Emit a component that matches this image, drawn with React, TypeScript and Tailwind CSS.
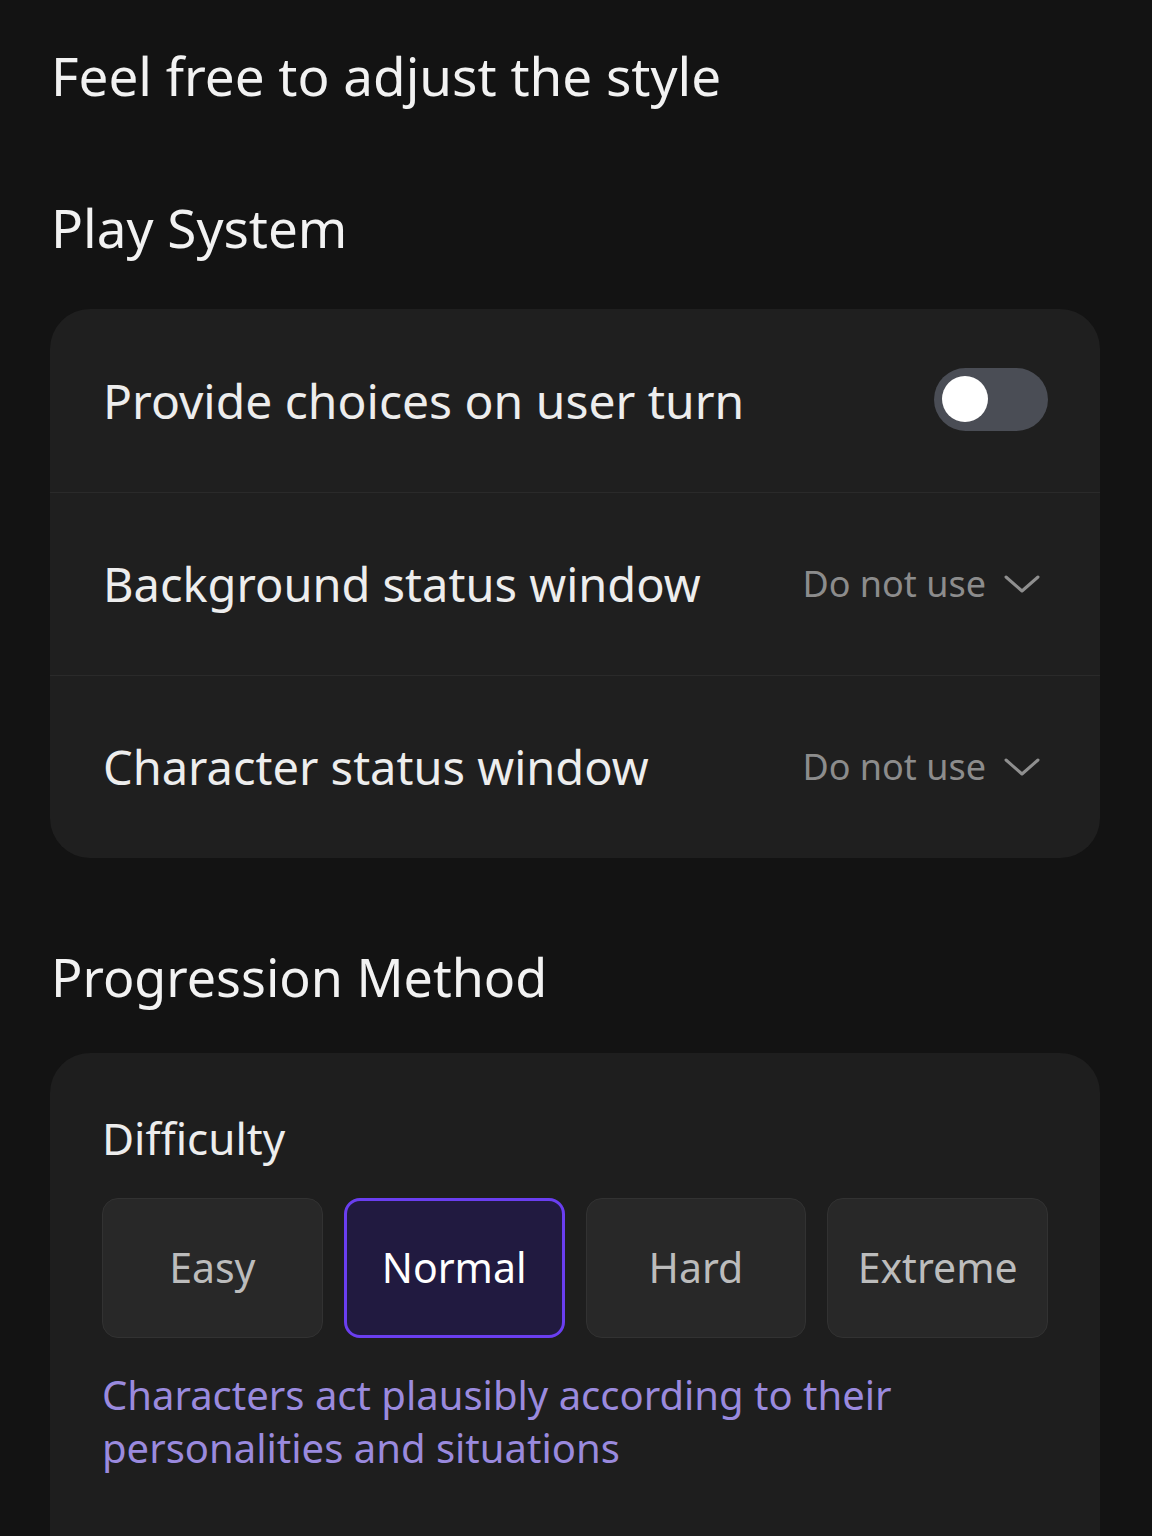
import React, { useState } from 'react'

type Level = 'Easy' | 'Normal' | 'Hard' | 'Extreme'

const levels: Level[] = ['Easy', 'Normal', 'Hard', 'Extreme']

const Chevron = () => (
  <svg width="36" height="20" viewBox="0 0 36 20" fill="none" className="shrink-0">
    <polyline points="2,3 18,17 34,3" stroke="#8f8f8f" strokeWidth="3" strokeLinecap="round" strokeLinejoin="round" />
  </svg>
)

const SelectRow = ({ label, value }: { label: string; value: string }) => (
  <div className="h-[183px] flex items-center justify-between pl-[53px] pr-[60px] border-t border-[#2a2a2a]">
    <span className="text-[47px] text-[#ededed]">{label}</span>
    <div className="flex items-center gap-[18px]">
      <span className="text-[36px] text-[#8c8c8c]">{value}</span>
      <Chevron />
    </div>
  </div>
)

export default function App() {
  const [choices, setChoices] = useState(false)
  const [level, setLevel] = useState<Level>('Normal')

  return (
    <div
      className="min-h-screen bg-[#131313] text-white px-[50px] pt-[44px] overflow-hidden"
      style={{ fontFamily: '"Noto Sans", "Open Sans", sans-serif', height: 1536 }}
    >
      <h1 className="text-[53px] leading-[64px] text-[#f2f2f2] pl-[1px]">Feel free to adjust the style</h1>

      {/* Play system */}
      <h2 className="mt-[88px] text-[53px] leading-[64px] text-[#f2f2f2] pl-[1px]">Play System</h2>
      <div className="mt-[49px] w-[1050px] rounded-[40px] bg-[#1f1f1f] overflow-hidden">
        <div className="h-[183px] flex items-center justify-between pl-[53px] pr-[52px]">
          <span className="text-[48px] text-[#ededed]">Provide choices on user turn</span>
          <button
            onClick={() => setChoices(!choices)}
            className={`w-[114px] h-[63px] -mt-[3px] rounded-full flex items-center px-[8px] ${
              choices ? 'bg-[#6d3ff0] justify-end' : 'bg-[#4a4d55] justify-start'
            }`}
          >
            <span className="w-[46px] h-[46px] rounded-full bg-white block" />
          </button>
        </div>
        <SelectRow label="Background status window" value="Do not use" />
        <SelectRow label="Character status window" value="Do not use" />
      </div>

      {/* Progression */}
      <h2 className="mt-[87px] text-[52px] leading-[64px] text-[#f2f2f2] pl-[1px]">Progression Method</h2>
      <div className="mt-[44px] w-[1050px] h-[600px] rounded-[40px] bg-[#1e1e1e] px-[52px] pt-[57px]">
        <div className="text-[44px] leading-[57px] text-[#ededed]">Difficulty</div>
        <div className="mt-[31px] grid grid-cols-4 gap-[21px]">
          {levels.map(l => (
            <button
              key={l}
              onClick={() => setLevel(l)}
              className={`h-[140px] rounded-[16px] flex items-center justify-center text-[41px] ${
                level === l
                  ? 'bg-[#211a40] border-[3px] border-[#6a3ef0] text-white'
                  : 'bg-[#282828] border border-[#323232] text-[#bcbcbc]'
              }`}
            >
              {l}
            </button>
          ))}
        </div>
        <p className="mt-[30px] text-[40px] leading-[53px] text-[#9a8ade] pr-[100px]">
          Characters act plausibly according to their personalities and situations
        </p>
      </div>
    </div>
  )
}
